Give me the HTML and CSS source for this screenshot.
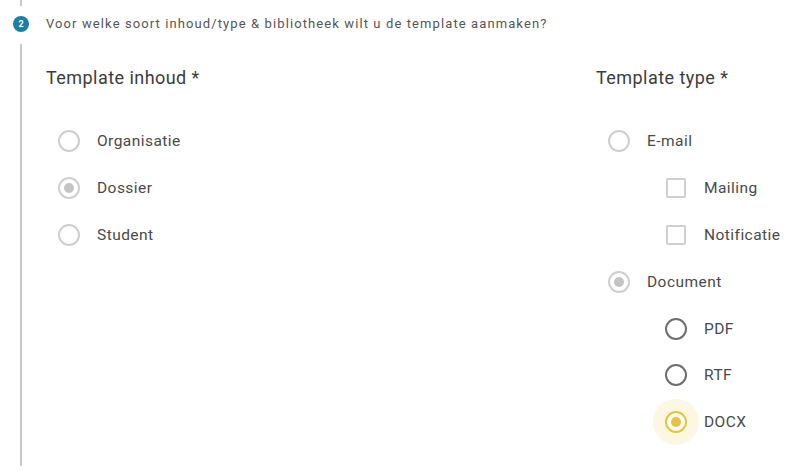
FILE: index.html
```html
<!DOCTYPE html>
<html>
<head>
<meta charset="utf-8">
<link rel="stylesheet" href="styles.css">
</head>
<body>
<div class="step">
  <div class="rail-top">
    <span class="stub"></span>
    <span class="badge">2</span>
  </div>
  <div class="question">Voor welke soort inhoud/type &amp; bibliotheek wilt u de template aanmaken?</div>
  <div class="rail-line"></div>
  <div class="content">
    <div class="col col-left">
      <div class="title">Template inhoud *</div>
      <div class="options">
        <div class="opt"><span class="radio disabled"></span><span class="label">Organisatie</span></div>
        <div class="opt"><span class="radio disabled checked"></span><span class="label">Dossier</span></div>
        <div class="opt"><span class="radio disabled"></span><span class="label">Student</span></div>
      </div>
    </div>
    <div class="col col-right">
      <div class="title">Template type *</div>
      <div class="options">
        <div class="opt"><span class="radio disabled"></span><span class="label">E-mail</span></div>
        <div class="opt sub"><span class="check"></span><span class="label">Mailing</span></div>
        <div class="opt sub"><span class="check"></span><span class="label">Notificatie</span></div>
        <div class="opt"><span class="radio disabled checked"></span><span class="label">Document</span></div>
        <div class="opt sub"><span class="radio"></span><span class="label">PDF</span></div>
        <div class="opt sub"><span class="radio"></span><span class="label">RTF</span></div>
        <div class="opt sub"><span class="radio active"></span><span class="label">DOCX</span></div>
      </div>
    </div>
  </div>
</div>
</body>
</html>
```

FILE: styles.css
```css
* { box-sizing: border-box; }
html, body { margin: 0; background: #fff; }
body {
  font-family: Roboto, "Noto Sans", Arial, sans-serif;
  color: #444;
  width: 806px;
  height: 471px;
  overflow: hidden;
}
.step {
  display: grid;
  grid-template-columns: 16px 1fr;
  grid-template-rows: 44px auto;
  column-gap: 17px;
  padding-left: 13px;
}
.rail-top {
  display: flex;
  flex-direction: column;
  align-items: center;
}
.stub {
  width: 2px;
  height: 6px;
  background: #c8c8c8;
  margin-bottom: 10px;
}
.badge {
  width: 16px;
  height: 16px;
  border-radius: 50%;
  background: #1e7ea6;
  color: #fff;
  font-size: 9px;
  font-weight: 700;
  display: flex;
  align-items: center;
  justify-content: center;
  line-height: 1;
}
.question {
  font-size: 13px;
  letter-spacing: 1.1px;
  color: #555;
  padding-top: 16px;
  line-height: 16px;
}
.rail-line {
  justify-self: center;
  width: 2px;
  height: 422px;
  background: #c8c8c8;
}
.content {
  display: grid;
  grid-template-columns: 550px 1fr;
}
.title {
  font-size: 18px;
  letter-spacing: 0.45px;
  color: #3c3c3c;
  line-height: 22px;
  margin-top: 23px;
  height: 22px;
}
.options {
  display: flex;
  flex-direction: column;
  margin-top: 29px;
}
.opt {
  display: flex;
  align-items: center;
  height: 46.8px;
  padding-left: 12px;
}
.opt.sub { padding-left: 69px; }
.label {
  font-size: 15.5px;
  color: #4a4a4a;
  margin-left: 17px;
  letter-spacing: 0.45px;
}
.radio {
  position: relative;
  width: 22px;
  height: 22px;
  border-radius: 50%;
  border: 2px solid #6e6e6e;
  background: #fff;
  flex: none;
}
.radio.disabled { border-color: #cfcfcf; }
.radio.checked::after {
  content: "";
  position: absolute;
  left: 4px;
  top: 4px;
  width: 10px;
  height: 10px;
  border-radius: 50%;
  background: #c4c4c4;
}
.radio.active {
  border-color: #e9c43b;
  box-shadow: 0 0 0 12px #fcf7e0;
}
.radio.active::after {
  content: "";
  position: absolute;
  left: 4px;
  top: 4px;
  width: 10px;
  height: 10px;
  border-radius: 50%;
  background: #e9c43b;
}
.check {
  width: 20px;
  height: 20px;
  border: 2px solid #cfcfcf;
  border-radius: 2px;
  flex: none;
  margin-left: 1px;
  margin-right: 1px;
}
```
